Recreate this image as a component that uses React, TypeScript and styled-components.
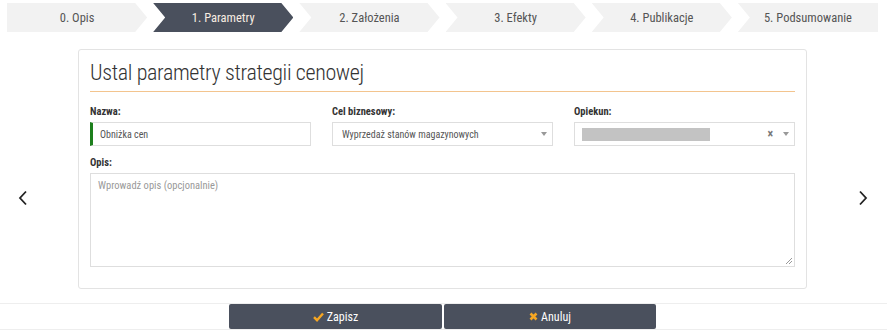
import React from "react";
import styled, { createGlobalStyle, css } from "styled-components";

const FONT = `"Roboto Condensed", "Liberation Sans Narrow", "DejaVu Sans Condensed", Roboto, sans-serif`;

const GlobalStyle = createGlobalStyle`
  html, body { margin: 0; padding: 0; background: #ffffff; }
  body { font-family: ${FONT}; color: #333; }
  * { box-sizing: border-box; }
`;

const Page = styled.div`
  width: 887px;
  height: 331px;
  overflow: hidden;
  background: #fff;
`;

const Steps = styled.div`
  display: flex;
  gap: 6px;
  padding: 3px 9px 0 7px;
`;

const D = 12;

const Step = styled.div<{ $first?: boolean; $last?: boolean; $active?: boolean }>`
  flex: 1;
  height: 29px;
  display: flex;
  align-items: center;
  justify-content: center;
  font-size: 12.5px;
  color: #555;
  background: #f2f2f2;
  clip-path: ${({ $first, $last }) =>
    `polygon(0 0, ${$last ? "100%" : `calc(100% - ${D}px)`} 0, 100% 50%, ${
      $last ? "100%" : `calc(100% - ${D}px)`
    } 100%, 0 100%, ${$first ? "0" : `${D}px`} 50%)`};
  ${({ $active }) =>
    $active &&
    css`
      background: #4a505d;
      color: #f7ece2;
    `}
`;

const Main = styled.div`
  display: flex;
  margin-top: 17px;
`;

const Side = styled.div<{ $right?: boolean }>`
  width: ${({ $right }) => ($right ? "80px" : "78px")};
  display: flex;
  justify-content: ${({ $right }) => ($right ? "flex-end" : "flex-start")};
  padding: ${({ $right }) => ($right ? "141px 19px 0 0" : "141px 0 0 18px")};
`;

const ArrowBtn = styled.div`
  width: 10px;
  height: 16px;
  display: flex;
  cursor: pointer;
`;

const Card = styled.div`
  width: 729px;
  border: 1px solid #e3e3e3;
  border-radius: 3px;
  padding: 8px 11px 21px;
`;

const Title = styled.h1`
  margin: 0;
  font-size: 22px;
  font-weight: 300;
  letter-spacing: -0.35px;
  line-height: 29px;
  color: #333;
  padding-bottom: 4px;
  border-bottom: 1px solid #f3c48e;
`;

const Row = styled.div`
  display: grid;
  grid-template-columns: repeat(3, 1fr);
  column-gap: 21px;
  margin-top: 13px;
`;

const Field = styled.div<{ $spaced?: boolean }>`
  display: flex;
  flex-direction: column;
  margin-top: ${({ $spaced }) => ($spaced ? "10px" : "0")};
`;

const Label = styled.label`
  font-size: 10.5px;
  font-weight: 700;
  line-height: 14px;
  color: #333;
  margin-bottom: 3px;
`;

const Box = styled.div<{ $accent?: boolean }>`
  height: 24px;
  border: 1px solid #dedede;
  border-left: ${({ $accent }) => ($accent ? "3px solid #1d7f1d" : "1px solid #dedede")};
  display: flex;
  align-items: center;
  padding: 0 5px 0 ${({ $accent }) => ($accent ? "7px" : "9px")};
  font-size: 10px;
  color: #555;
  background: #fff;
`;

const BoxText = styled.span`
  flex: 1;
  white-space: nowrap;
  overflow: hidden;
`;

const Caret = styled.span`
  width: 0;
  height: 0;
  border-left: 3px solid transparent;
  border-right: 3px solid transparent;
  border-top: 4px solid #999;
  margin-left: 10px;
`;

const Clear = styled.span`
  font-size: 12px;
  font-weight: 700;
  color: #777;
  line-height: 1;
`;

const Masked = styled.span`
  width: 128px;
  height: 13px;
  background: #c3c3c3;
  margin-left: -2px;
`;

const Spacer = styled.span`
  flex: 1;
`;

const TextArea = styled.div`
  position: relative;
  height: 94px;
  border: 1px solid #dedede;
  padding: 5px 7px;
  font-size: 10.5px;
  color: #999;
`;

const Grip = styled.svg`
  position: absolute;
  right: 1px;
  bottom: 1px;
`;

const Footer = styled.div`
  margin-top: 14px;
  border-top: 1px solid #eeeeee;
  border-bottom: 1px solid #eeeeee;
  display: flex;
  justify-content: center;
  gap: 2px;
  padding-right: 2px;
`;

const Button = styled.button<{ $w: number }>`
  width: ${({ $w }) => $w}px;
  height: 25px;
  border: none;
  border-radius: 2px;
  background: #4a505d;
  color: #fff;
  font-family: ${FONT};
  font-size: 12px;
  display: flex;
  align-items: center;
  justify-content: center;
  gap: 3px;
  padding: 0;
  cursor: pointer;
`;

const Chevron = ({ dir }: { dir: "left" | "right" }) => (
  <svg width="10" height="16" viewBox="0 0 10 16">
    <path
      d={dir === "left" ? "M8 1.5 L2 8 L8 14.5" : "M2 1.5 L8 8 L2 14.5"}
      fill="none"
      stroke="#222"
      strokeWidth="1.8"
    />
  </svg>
);

const steps = ["0. Opis", "1. Parametry", "2. Założenia", "3. Efekty", "4. Publikacje", "5. Podsumowanie"];

export default function App() {
  return (
    <Page>
      <GlobalStyle />
      <Steps>
        {steps.map((s, i) => (
          <Step key={s} $first={i === 0} $last={i === steps.length - 1} $active={i === 1}>
            {s}
          </Step>
        ))}
      </Steps>
      <Main>
        <Side>
          <ArrowBtn>
            <Chevron dir="left" />
          </ArrowBtn>
        </Side>
        <Card>
          <Title>Ustal parametry strategii cenowej</Title>
          <Row>
            <Field>
              <Label>Nazwa:</Label>
              <Box $accent>
                <BoxText>Obniżka cen</BoxText>
              </Box>
            </Field>
            <Field>
              <Label>Cel biznesowy:</Label>
              <Box>
                <BoxText>Wyprzedaż stanów magazynowych</BoxText>
                <Caret />
              </Box>
            </Field>
            <Field>
              <Label>Opiekun:</Label>
              <Box>
                <Masked />
                <Spacer />
                <Clear>×</Clear>
                <Caret />
              </Box>
            </Field>
          </Row>
          <Field $spaced>
            <Label>Opis:</Label>
            <TextArea>
              Wprowadź opis (opcjonalnie)
              <Grip width="8" height="8" viewBox="0 0 8 8">
                <path d="M7 1 L1 7 M7 4 L4 7" stroke="#999" strokeWidth="1" />
              </Grip>
            </TextArea>
          </Field>
        </Card>
        <Side $right>
          <ArrowBtn>
            <Chevron dir="right" />
          </ArrowBtn>
        </Side>
      </Main>
      <Footer>
        <Button $w={213}>
          <svg width="11" height="10" viewBox="0 0 11 10">
            <path d="M1 5.2 L4 8.2 L10 1.5" fill="none" stroke="#f5a623" strokeWidth="2.4" />
          </svg>
          Zapisz
        </Button>
        <Button $w={212}>
          <svg width="9" height="9" viewBox="0 0 9 9">
            <path d="M1.5 1.5 L7.5 7.5 M7.5 1.5 L1.5 7.5" stroke="#f5a623" strokeWidth="2.6" />
          </svg>
          Anuluj
        </Button>
      </Footer>
    </Page>
  );
}
